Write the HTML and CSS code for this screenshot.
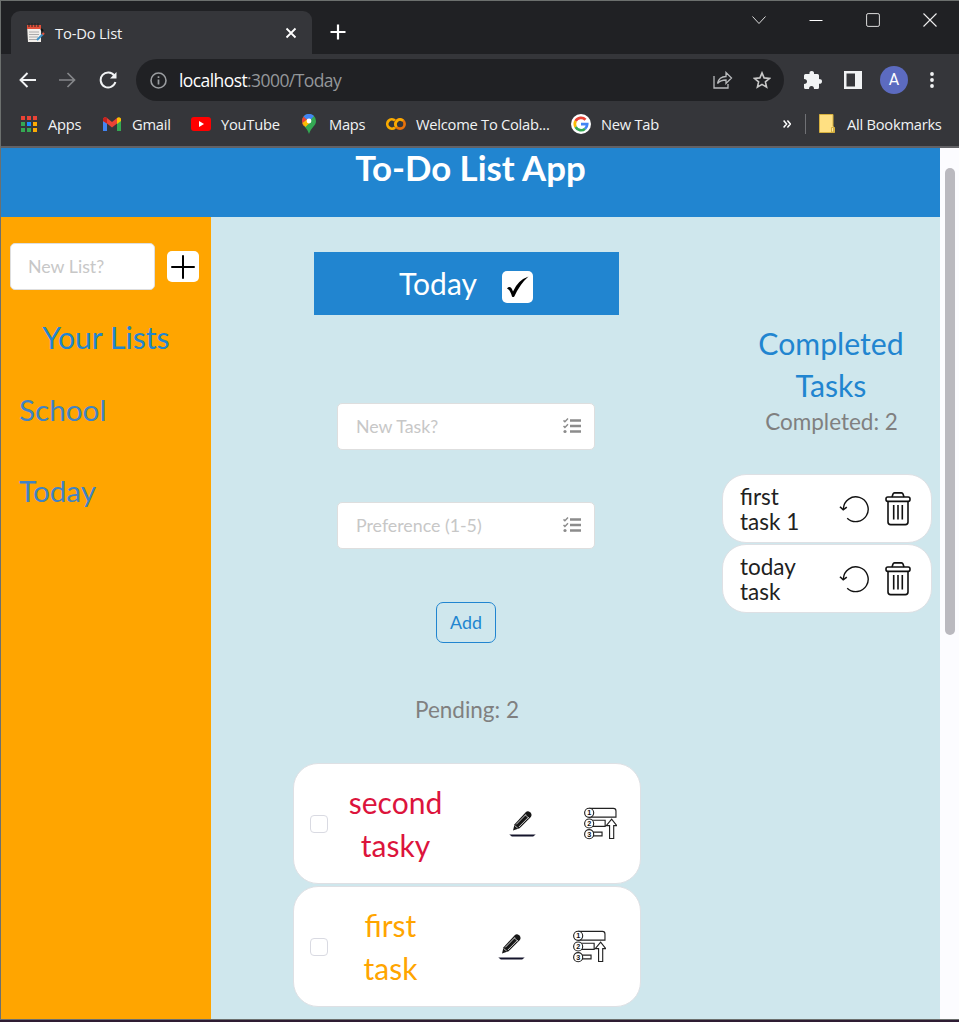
FILE: index.html
```html
<!DOCTYPE html>
<html lang="en">
<head>
<meta charset="utf-8">
<title>To-Do List</title>
<link rel="stylesheet" href="styles.css">
</head>
<body>
<svg class="defs" width="0" height="0">
  <symbol id="tasks" viewBox="0 0 18 16"><path d="M7 2.500h11M7 8h11M7 13.500h11" stroke="#8c8c8c" stroke-width="2.600" fill="none"/><path d="M.5 2.400l1.400 1.400L5 .6M.5 8l1.400 1.400L5 6.200" stroke="#8c8c8c" stroke-width="1.500" fill="none"/><circle cx="2" cy="13.500" r="1.600" fill="#8c8c8c"/></symbol>
  <symbol id="undo" viewBox="0 0 30 28"><path d="M8.200 23.200A12.400 12.400 0 1 0 4.400 13.500v1.600" stroke="#111" stroke-width="1.400" fill="none"/><path d="M1 11.700l3.200 3.100 3.600-2.700" stroke="#111" stroke-width="1.600" fill="none"/></symbol>
  <symbol id="trash" viewBox="0 0 26 34"><g fill="none" stroke="#111" stroke-width="1.600" stroke-linejoin="round"><rect x="1" y="5" width="24" height="4.400" rx="1.800"/><path d="M7 5l1-3q.4-1.100 1.500-1.100h7q1.100 0 1.500 1.100l1 3M3 9.400v20.600q0 2.600 2.600 2.600h14.800q2.600 0 2.600-2.600V9.400M8.700 13v14.500M13 13v14.500M17.300 13v14.500"/></g></symbol>
  <symbol id="edit" viewBox="0 0 27 27"><path d="M4 20.500l1.600-6.200L16.500 2.500q2.200-2.200 4.600-.2t.8 4.700L10.600 18.300z" fill="#161616"/><path d="M7.200 14.400L16.800 4.600M9.900 17L19.600 7.200" stroke="#fff" stroke-width=".8"/><path d="M5.700 15.600l3 2.400M16 4.600l3.900 3.600" stroke="#fff" stroke-width=".7"/><path d="M.3 24.600h26.400l-2.500 2H2.800z" fill="#14142b"/></symbol>
  <symbol id="rank" viewBox="0 0 32 32"><g fill="none" stroke="#222" stroke-width="1.100"><path d="M5 1.300h23.500q2.500 0 2.500 2.500v6H5"/><path d="M8 12.800h12.500v6H8M8 24.300h9.500v3.700H8M24.800 30.500V18h-3.200l5.200-6.200 5 6.200h-3v12.500z"/><circle cx="5" cy="5.600" r="4.400" fill="#fff"/><circle cx="5" cy="16" r="4.400" fill="#fff"/><circle cx="5" cy="26.400" r="4.400" fill="#fff"/></g></symbol>
</svg>
<div class="window">
  <div class="tabstrip">
    <div class="tab">
      <svg class="favicon" width="19" height="20" viewBox="0 0 19 20"><path d="M1 2h14v17H2z" fill="#f1eeea"/><path d="M1 2h14v4H1z" fill="#e3503a"/><path d="M3 0v4M6 0v4M9 0v4M12 0v4" stroke="#222" stroke-width="1"/><path d="M3 9h10M3 11.500h10M3 14h9M3 16.500h8" stroke="#aaa" stroke-width="1"/><path d="M11 17l6-6" stroke="#3b91c7" stroke-width="2"/><path d="M16.500 11.500l1.500-1.500" stroke="#e3503a" stroke-width="2.200"/><path d="M15 6l2 2" stroke="#111" stroke-width="2"/></svg>
      <span class="tab-title">To-Do List</span>
      <svg width="12" height="12" viewBox="0 0 12 12"><path d="M1.500 1.500l9 9M10.500 1.500l-9 9" stroke="#fff" stroke-width="1.800"/></svg>
    </div>
    <svg class="new-tab" width="16" height="16" viewBox="0 0 16 16"><path d="M8 .5v15M.5 8h15" stroke="#fff" stroke-width="2.200"/></svg>
    <div class="controls">
      <svg width="14" height="14" viewBox="0 0 14 14"><path d="M.5 3.500l6.500 7 6.500-7" stroke="#ddd" fill="none"/></svg>
      <svg width="14" height="14" viewBox="0 0 14 14"><path d="M.5 7.500h13" stroke="#fff"/></svg>
      <svg width="14" height="14" viewBox="0 0 14 14"><rect x=".6" y=".6" width="12.800" height="12.800" rx="1.500" stroke="#ddd" fill="none"/></svg>
      <svg width="14" height="14" viewBox="0 0 14 14"><path d="M.5.5l13 13M13.500.5l-13 13" stroke="#eee" stroke-width="1.100"/></svg>
    </div>
  </div>
  <div class="toolbar">
    <svg width="17" height="16" viewBox="0 0 17 16"><path d="M17 8H1.500M8.500 1l-7 7 7 7" stroke="#f1f3f4" stroke-width="1.900" fill="none"/></svg>
    <svg width="17" height="16" viewBox="0 0 17 16"><path d="M0 8h15.500M8.500 1l7 7-7 7" stroke="#85878a" stroke-width="1.700" fill="none"/></svg>
    <svg width="18" height="18" viewBox="0 0 18 18"><path d="M15.300 4.600A7.500 7.500 0 1 0 16.400 11" stroke="#f1f3f4" stroke-width="2" fill="none"/><path d="M17.500 1v6.500H11z" fill="#f1f3f4"/></svg>
    <div class="omnibox">
      <svg width="17" height="17" viewBox="0 0 17 17"><circle cx="8.500" cy="8.500" r="7.500" stroke="#9a9da0" stroke-width="1.600" fill="none"/><path d="M8.500 7.500v5M8.500 4.200v1.900" stroke="#9a9da0" stroke-width="1.700"/></svg>
      <span class="url">localhost<i>:3000/Today</i></span>
      <svg class="share" width="20" height="18" viewBox="0 0 20 18"><path d="M1 5v12h14v-4M4.500 12.500Q6 5.500 13 5.500V1.500l5.500 5.500-5.500 5.500V9Q7.500 9 4.500 12.500z" stroke="#b9bbbd" stroke-width="1.300" fill="none"/></svg>
      <svg width="18" height="18" viewBox="0 0 18 18"><path d="M9 1.900l2.100 5 5.400.5-4.100 3.500 1.200 5.300L9 13.400l-4.600 2.800 1.200-5.300L1.500 7.400l5.400-.5z" stroke="#c8c8c8" stroke-width="1.600" fill="none"/></svg>
    </div>
    <svg class="ext" width="18" height="18" viewBox="0 0 18 18"><path d="M0 4.500Q0 3 1.500 3H5.500Q5 0 7.700 0T10 3h3.500Q15 3 15 4.500V8q3 0 3 2.400T15 12.700v3.800q0 1.500-1.500 1.500H10Q10 15 7.500 15T5 18H1.500Q0 18 0 16.500V13q3 0 3-2.400T0 8z" fill="#f1f3f4"/></svg>
    <svg class="panel" width="18" height="18" viewBox="0 0 18 18"><path d="M0 0h18v18H0zM2.500 2.500v13H11v-13z" fill="#f1f3f4" fill-rule="evenodd"/></svg>
    <span class="avatar">A</span>
    <svg width="4" height="16" viewBox="0 0 4 16"><g fill="#f1f3f4"><circle cx="2" cy="2" r="1.900"/><circle cx="2" cy="8" r="1.900"/><circle cx="2" cy="14" r="1.900"/></g></svg>
  </div>
  <div class="bookmarks">
    <svg width="18" height="18" viewBox="0 0 18 18"><path d="M1 1h4v4H1zM7 1h4v4H7zM13 1h4v4h-4z" fill="#ea4335"/><path d="M1 7h4v4H1zM1 13h4v4H1zM7 13h4v4H7z" fill="#34a853"/><path d="M7 7h4v4H7z" fill="#1a8cff"/><path d="M13 7h4v4h-4zM13 13h4v4h-4z" fill="#fbaa05"/></svg><span class="bm bm-apps">Apps</span>
    <svg width="18" height="14" viewBox="0 0 18 14"><path d="M0 2v12h4V5z" fill="#4285f4"/><path d="M18 2v12h-4V5z" fill="#34a853"/><path d="M0 1.500Q2-.8 4 1l5 4 5-4v5.500l-5 4-5-4L0 4z" fill="#ea4335"/><path d="M14 1q2-1.800 4 .5V4l-4 3z" fill="#fbbc04"/><path d="M0 1.500Q2-.8 4 1v5.500L0 4z" fill="#c5221f"/></svg><span class="bm bm-gmail">Gmail</span>
    <svg width="20" height="14" viewBox="0 0 20 14"><rect width="20" height="14" rx="3" fill="#f00"/><path d="M8 4l5 3-5 3z" fill="#fff"/></svg><span class="bm bm-yt">YouTube</span>
    <svg width="14" height="20" viewBox="0 0 14 20"><path d="M7 0a7 7 0 0 1 7 7c0 5-5 6-7 13C5 13 0 12 0 7a7 7 0 0 1 7-7z" fill="#34a853"/><path d="M1.500 2.500L7 7l-5.500 5Q0 9.500 0 7T1.500 2.500z" fill="#ea4335"/><path d="M1.500 2.500A7 7 0 0 1 12 2L7 7.500z" fill="#4285f4"/><path d="M.5 9L5 5.500l3 3L3.500 13Q1 11 .5 9z" fill="#fbbc04"/><circle cx="7" cy="7" r="2.400" fill="#fff"/></svg><span class="bm bm-maps">Maps</span>
    <svg width="20" height="12" viewBox="0 0 20 12"><path d="M9 2.600A4.600 4.600 0 1 0 9 9.400" stroke="#f9ab00" stroke-width="2.700" fill="none"/><circle cx="14" cy="6" r="4.600" stroke="#e8710a" stroke-width="2.700" fill="none"/><path d="M10.500 9A4.600 4.600 0 0 1 17 2.600" stroke="#f9ab00" stroke-width="2.700" fill="none"/></svg><span class="bm bm-colab">Welcome To Colab...</span>
    <svg width="20" height="20" viewBox="0 0 20 20"><circle cx="10" cy="10" r="10" fill="#fff"/><g fill="none" stroke-width="2.700"><path d="M14.500 5.700A6.200 6.200 0 0 0 4.600 7" stroke="#ea4335"/><path d="M4.600 7a6.200 6.200 0 0 0 0 6" stroke="#fbbc04"/><path d="M4.600 13a6.200 6.200 0 0 0 9.500 1.700" stroke="#34a853"/><path d="M14.100 14.700a6.200 6.200 0 0 0 2.100-4.500H10" stroke="#4285f4"/></g></svg><span class="bm bm-newtab">New Tab</span>
    <svg class="more" width="8" height="8" viewBox="0 0 8 8"><path d="M.6.600L3.600 4 .6 7.400M4.400.600L7.400 4 4.400 7.400" stroke="#fff" stroke-width="1.500" fill="none"/></svg>
    <span class="divider"></span>
    <svg width="16" height="19" viewBox="0 0 16 19"><path d="M.5.500h13.500v12l1.500 1v5H.5z" fill="#ffe082" stroke="#d7b13f"/><path d="M12.500 18v-4.500h2V18z" fill="#ffe9a5" stroke="#c9a32e" stroke-width=".8"/></svg><span class="bm bm-all">All Bookmarks</span>
  </div>
  <div class="viewport">
    <div class="page">
      <header class="banner"><h1>To-Do List App</h1></header>
      <aside class="sidebar">
        <div class="new-list">
          <div class="field">New List?</div>
          <button class="square plus"><svg width="24" height="24" viewBox="0 0 24 24"><path d="M12 1v22M1 12h22" stroke="#000" stroke-width="2" stroke-linecap="round"/></svg></button>
        </div>
        <h2>Your Lists</h2>
        <a class="list-link">School</a>
        <a class="list-link">Today</a>
      </aside>
      <main class="tasks">
        <div class="list-title"><span>Today</span><button class="square"><svg width="23" height="22" viewBox="0 0 23 22"><path d="M1 12.500q3.500-4 6 3Q12 4 22.500.500 14 8 8.300 20.500q-1.200 1.200-2.300 0Q4 13.500 1 12.500z" fill="#000"/></svg></button></div>
        <div class="field task-field"><span>New Task?</span><svg width="18" height="16"><use href="#tasks"/></svg></div>
        <div class="field task-field"><span>Preference (1-5)</span><svg width="18" height="16"><use href="#tasks"/></svg></div>
        <button class="add">Add</button>
        <p class="count">Pending: 2</p>
        <div class="card urgent"><span class="check"></span><span class="name">second tasky</span><svg class="edit" width="27" height="27"><use href="#edit"/></svg><svg class="rank" width="33" height="33" viewBox="0 0 32 32"><use href="#rank" width="32" height="32"/><text x="5" y="8.200">1</text><text x="5" y="18.600">2</text><text x="5" y="29">3</text></svg></div>
        <div class="card normal"><span class="check"></span><span class="name">first task</span><svg class="edit" width="27" height="27"><use href="#edit"/></svg><svg class="rank" width="33" height="33" viewBox="0 0 32 32"><use href="#rank" width="32" height="32"/><text x="5" y="8.200">1</text><text x="5" y="18.600">2</text><text x="5" y="29">3</text></svg></div>
      </main>
      <section class="done">
        <h2>Completed Tasks</h2>
        <p class="count">Completed: 2</p>
        <div class="done-card"><span>first task 1</span><svg width="30" height="28"><use href="#undo"/></svg><svg width="26" height="34"><use href="#trash"/></svg></div>
        <div class="done-card"><span>today task</span><svg width="30" height="28"><use href="#undo"/></svg><svg width="26" height="34"><use href="#trash"/></svg></div>
      </section>
    </div>
    <div class="scrollbar"><div class="thumb"></div></div>
  </div>
</div>
</body>
</html>
```
FILE: styles.css
```css
* { box-sizing: border-box; }
body { margin: 0; height: 1022px; overflow: hidden; background: #2e1c33; font-family: Lato, sans-serif; }
svg { display: block; flex: none; }
.defs { position: absolute; }
h1, h2, p { margin: 0; font-weight: 400; }
button { font-family: inherit; padding: 0; }

.window { height: 1020px; border: 1px solid #6c706e; border-right: 0; display: flex; flex-direction: column; }
.tabstrip { height: 53px; flex: none; background: #202124; display: flex; align-items: flex-start; font-family: "Open Sans", sans-serif; }
.tab { width: 301px; height: 43px; margin: 10px 0 0 10px; padding: 0 15px 0 15px; background: #35363a; border-radius: 9px 9px 0 0; display: flex; align-items: center; color: #f1f3f4; font-size: 14.800px; }
.tab-title { flex: 1; margin-left: 10px; white-space: nowrap; letter-spacing: -.2px; }
.new-tab { margin: 23px 0 0 18px; }
.controls { margin: 12px 22px 0 auto; display: flex; gap: 43px; }

.toolbar { height: 52px; flex: none; background: #35363a; display: flex; align-items: center; padding: 0 25px 0 18px; gap: 23px; }
.omnibox { width: 648px; height: 42px; margin: 0 0 0 -4px; border-radius: 21px; background: #202124; display: flex; align-items: center; padding: 0 13px 0 14px; font-family: "Open Sans", sans-serif; }
.url { margin-left: 12px; color: #fff; font-size: 17.500px; letter-spacing: -.58px; }
.url i { font-style: normal; color: #94979a; }
.share { margin: 0 20px 0 auto; }
.ext { margin-left: -3px; }
.panel { margin-left: -1px; }
.avatar { width: 28px; height: 28px; margin: 0 -1px 0 -5px; border-radius: 50%; background: #5c6bc0; color: #fff; font: 16px/28px Roboto, sans-serif; text-align: center; }

.bookmarks { height: 42px; flex: none; background: #35363a; border-bottom: 2px solid #626266; display: flex; align-items: center; padding: 0 0 5px 19px; color: #f1f3f4; font-family: "Open Sans", sans-serif; font-size: 14.700px; white-space: nowrap; letter-spacing: -.25px; }
.bm { margin-left: 10px; }
.bm-apps { width: 55px; }
.bm-gmail { width: 59px; margin-left: 11px; }
.bm-yt { width: 81px; }
.bm-maps { width: 57px; margin-left: 13px; }
.bm-colab { width: 155px; }
.bm-newtab { width: 66px; }
.more { margin-left: 116px; }
.divider { width: 1px; height: 20px; margin: 0 13px 0 14px; background: #707175; }
.bm-all { margin-left: 12px; }

.viewport { flex: 1; min-height: 0; display: flex; }
.page { width: 939px; display: grid; grid-template-columns: 210px 510px 219px; grid-template-rows: 69px 1fr; background: #cfe7ed; }
.banner { grid-column: 1 / -1; background: #2185d0; text-align: center; }
.banner h1 { font-size: 34.800px; line-height: 40px; font-weight: 700; color: #fff; }
.scrollbar { width: 19px; background: #fcfcff; padding: 20px 4px 0 5px; }
.thumb { height: 467px; border-radius: 5px; background: #bab9bf; }

.sidebar { background: #ffa500; padding: 26px 9px 0; }
.new-list { display: flex; align-items: center; gap: 12px; }
.field { width: 145px; height: 47px; padding: 0 17px 2px; border: 1px solid #dedede; border-radius: 5px; background: #fff; color: #c7c7c7; font-size: 17.800px; display: flex; align-items: center; }
.square { width: 31px; height: 32px; border: 0; border-radius: 5px; background: #fff; display: grid; place-items: center; }
.plus { width: 32px; height: 31px; }
h2 { color: #2185d0; font-size: 30.200px; line-height: 42px; text-align: center; }
.sidebar h2 { margin-top: 26px; }
.list-link { display: block; margin: 31px 0 0 9px; color: #4183c4; font-size: 29.700px; line-height: 42px; }
.list-link + .list-link { margin-top: 39px; }

.tasks { padding-top: 35px; display: flex; flex-direction: column; align-items: center; }
.list-title { width: 305px; height: 63px; background: #2185d0; color: #fff; font-size: 30px; display: flex; align-items: center; justify-content: center; gap: 25px; }
.list-title span { padding-bottom: 2px; }
.list-title .square { margin-top: 7px; }
.task-field { width: 258px; margin-top: 88px; padding: 0 13px 2px 18px; justify-content: space-between; }
.task-field + .task-field { margin-top: 52px; }
.add { width: 60px; height: 41px; margin-top: 53px; padding-bottom: 2px; border: 1px solid #2185d0; border-radius: 7px; background: none; color: #2185d0; font-size: 17.800px; }
.count { color: #808080; font-size: 22.500px; line-height: 30px; text-align: center; }
.tasks .count { margin: 52px 0 38px 2px; }
.card { width: 348px; height: 121px; flex: none; margin: 0 0 2px 1px; border: 1px solid #dee0e4; border-radius: 25px; background: #fff; display: flex; align-items: center; padding-left: 16px; }
.check { width: 18px; height: 18px; flex: none; border: 1px solid #d9dae2; border-radius: 4px; }
.name { width: 94px; margin-left: 21px; font-size: 30px; line-height: 43px; text-align: center; }
.urgent .name { color: #dc143c; }
.normal .name { color: #ffa500; width: 56px; margin-left: 35px; }
.edit { margin-left: 66px; }
.normal .edit { margin-left: 79px; }
.rank { margin-left: 48px; }
.rank text { font: 700 7px "Liberation Sans", sans-serif; text-anchor: middle; fill: #111; }

.done { padding: 105px 8px 0 1px; }
.done h2 { width: 160px; margin: 0 auto 0 29px; }
.done .count { margin: 1px 0 37px 9px; }
.done-card { width: 210px; height: 69px; margin-bottom: 1px; padding: 0 20px 0 17px; border: 1px solid #dee0e4; border-radius: 24px; background: #fff; display: flex; align-items: center; gap: 16px; color: #212121; font-size: 22.500px; line-height: 25px; }
.done-card span { width: 70px; margin-right: auto; }
```
